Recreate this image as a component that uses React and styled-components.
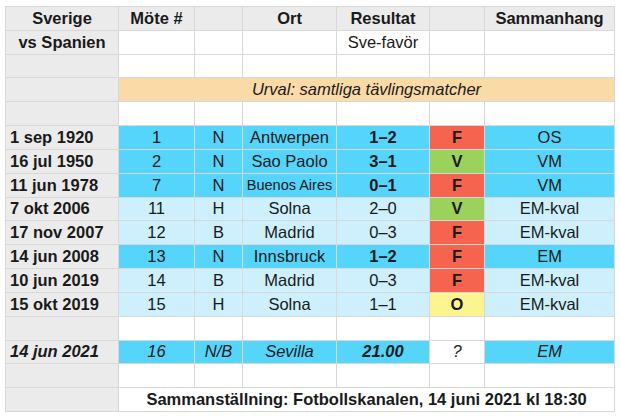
import styled, { createGlobalStyle } from 'styled-components';

const GlobalStyle = createGlobalStyle`
  html, body {
    margin: 0;
    padding: 0;
    background: #ffffff;
  }
  body {
    font-family: "Liberation Sans", Arial, Helvetica, sans-serif;
    color: #1a1a1a;
  }
`;

const colors = {
  head: '#ebebeb',
  white: '#ffffff',
  blue: '#55d5fb',
  light: '#cdf0fc',
  peach: '#fadba8',
  red: '#f6634f',
  green: '#9bd25c',
  yellow: '#fcf58f',
};

const Page = styled.div`
  padding: 6px 0 0 5px;
`;

const Sheet = styled.div`
  display: grid;
  grid-template-columns: 112px 75px 47px 93px 92px 54px 129px;
  grid-template-rows: repeat(17, 1fr);
  gap: 1px;
  padding: 1px;
  width: max-content;
  height: 404px;
  background: #d8d8d8;
`;

const Cell = styled.div`
  display: flex;
  align-items: center;
  justify-content: ${(p) => (p.$align === 'left' ? 'flex-start' : 'center')};
  padding: 0 ${(p) => (p.$align === 'left' ? '4px' : '0')};
  grid-column: ${(p) => (p.$span ? `span ${p.$span}` : 'auto')};
  background: ${(p) => colors[p.$bg || 'white']};
  font-size: ${(p) => p.$size || 16.5}px;
  font-weight: ${(p) => (p.$bold ? 700 : 400)};
  font-style: ${(p) => (p.$italic ? 'italic' : 'normal')};
  white-space: nowrap;
  overflow: hidden;
`;

const DateCell = styled(Cell).attrs({ $bg: 'head', $align: 'left', $bold: true })``;

const matches = [
  ['1 sep 1920', '1', 'N', 'Antwerpen', '1–2', 'F', 'OS', true],
  ['16 jul 1950', '2', 'N', 'Sao Paolo', '3–1', 'V', 'VM', true],
  ['11 jun 1978', '7', 'N', 'Buenos Aires', '0–1', 'F', 'VM', true],
  ['7 okt 2006', '11', 'H', 'Solna', '2–0', 'V', 'EM-kval', false],
  ['17 nov 2007', '12', 'B', 'Madrid', '0–3', 'F', 'EM-kval', false],
  ['14 jun 2008', '13', 'N', 'Innsbruck', '1–2', 'F', 'EM', true],
  ['10 jun 2019', '14', 'B', 'Madrid', '0–3', 'F', 'EM-kval', false],
  ['15 okt 2019', '15', 'H', 'Solna', '1–1', 'O', 'EM-kval', false],
];

const outcomeBg = { F: 'red', V: 'green', O: 'yellow' };

const EmptyRow = () => (
  <>
    <Cell $bg="head" />
    {Array.from({ length: 6 }).map((_, i) => (
      <Cell key={i} />
    ))}
  </>
);

const MatchRow = ({ m }) => {
  const [date, nr, venue, city, score, outcome, comp, neutral] = m;
  const bg = neutral ? 'blue' : 'light';
  return (
    <>
      <DateCell>{date}</DateCell>
      <Cell $bg={bg}>{nr}</Cell>
      <Cell $bg={bg}>{venue}</Cell>
      <Cell $bg={bg} $size={city.length > 10 ? 14.5 : undefined}>
        {city}
      </Cell>
      <Cell $bg={bg} $bold={neutral}>
        {score}
      </Cell>
      <Cell $bg={outcomeBg[outcome]} $bold>
        {outcome}
      </Cell>
      <Cell $bg={bg}>{comp}</Cell>
    </>
  );
};

const App = () => {
  return (
    <Page>
      <GlobalStyle />
      <Sheet>
        <Cell $bg="head" $bold>Sverige</Cell>
        <Cell $bg="head" $bold>Möte #</Cell>
        <Cell $bg="head" />
        <Cell $bg="head" $bold>Ort</Cell>
        <Cell $bg="head" $bold>Resultat</Cell>
        <Cell $bg="head" />
        <Cell $bg="head" $bold>Sammanhang</Cell>

        <Cell $bg="head" $bold>vs Spanien</Cell>
        <Cell />
        <Cell />
        <Cell />
        <Cell>Sve-favör</Cell>
        <Cell />
        <Cell />

        <EmptyRow />

        <Cell $bg="head" />
        <Cell $bg="peach" $span={6} $italic>
          Urval: samtliga tävlingsmatcher
        </Cell>

        <EmptyRow />

        {matches.map((m) => (
          <MatchRow key={m[0]} m={m} />
        ))}

        <EmptyRow />

        <DateCell $italic>14 jun 2021</DateCell>
        <Cell $bg="blue" $italic>16</Cell>
        <Cell $bg="blue" $italic>N/B</Cell>
        <Cell $bg="blue" $italic>Sevilla</Cell>
        <Cell $bg="blue" $italic $bold>21.00</Cell>
        <Cell $italic>?</Cell>
        <Cell $bg="blue" $italic>EM</Cell>

        <EmptyRow />

        <Cell $bg="head" />
        <Cell $span={6} $bold>
          Sammanställning: Fotbollskanalen, 14 juni 2021 kl 18:30
        </Cell>
      </Sheet>
    </Page>
  );
};

export default App;
